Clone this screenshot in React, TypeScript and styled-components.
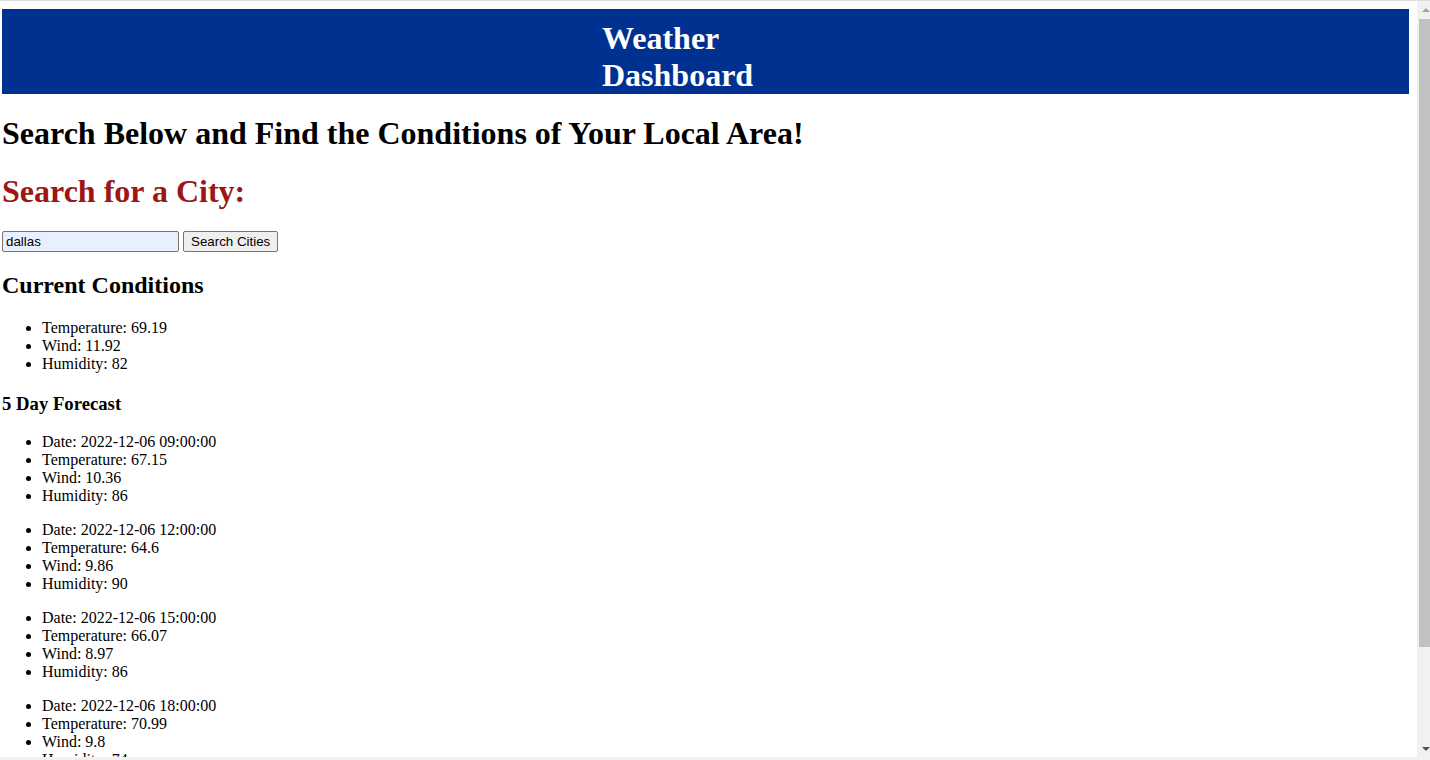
import React from "react";
import styled, { createGlobalStyle } from "styled-components";

type Forecast = {
  date: string;
  temp: string;
  wind: string;
  humidity: string;
};

const forecasts: Forecast[] = [
  { date: "2022-12-06 09:00:00", temp: "67.15", wind: "10.36", humidity: "86" },
  { date: "2022-12-06 12:00:00", temp: "64.6", wind: "9.86", humidity: "90" },
  { date: "2022-12-06 15:00:00", temp: "66.07", wind: "8.97", humidity: "86" },
  { date: "2022-12-06 18:00:00", temp: "70.99", wind: "9.8", humidity: "74" },
];

const GlobalStyle = createGlobalStyle`
  html, body {
    margin: 0;
    padding: 0;
    height: 760px;
    overflow: hidden;
    background: #ffffff;
  }
`;

const Frame = styled.div`
  display: flex;
  flex-direction: column;
  width: 1430px;
  height: 760px;
  border-top: 1px solid #dedede;
  box-sizing: border-box;
`;

const Viewport = styled.div`
  flex: 1;
  display: flex;
  min-height: 0;
`;

const Page = styled.div`
  flex: 1;
  min-width: 0;
  overflow: hidden;
  padding: 8px 8px 0 2px;
  font-family: "Liberation Serif", "Times New Roman", serif;
  font-size: 16px;
  color: #000000;
`;

const BottomBand = styled.div`
  height: 3px;
  background: #f1f1f1;
`;

/* fake browser scrollbar */
const ScrollBar = styled.div`
  width: 13px;
  background: #f1f1f1;
  display: flex;
  flex-direction: column;
  align-items: flex-end;
`;

const ScrollButton = styled.div`
  width: 13px;
  height: 17px;
  display: flex;
  align-items: center;
  justify-content: center;
  padding-left: 4px;
  box-sizing: border-box;
`;

const Thumb = styled.div`
  width: 11px;
  height: 628px;
  margin-top: 1px;
  background: #c1c1c1;
`;

const Spacer = styled.div`
  flex: 1;
`;

const Header = styled.header`
  background: #003190;
  padding: 11px 0 0;
`;

const Title = styled.h1`
  width: 207px;
  margin: 0 auto;
  color: #ffffff;
  font-size: 32px;
  font-weight: bold;
`;

const Tagline = styled.h1<{ $red?: boolean }>`
  font-size: 32px;
  margin: 21px 0;
  color: ${p => (p.$red ? "#9d1515" : "#000000")};
`;

const SearchForm = styled.form`
  display: flex;
  align-items: center;
  gap: 4px;
  margin: 0;
`;

const CityInput = styled.input`
  width: 177px;
  height: 21px;
  box-sizing: border-box;
  border: 1px solid #767676;
  border-radius: 2px;
  background: #e8f0fe;
  padding: 1px 3px;
  font-family: "Liberation Sans", Arial, sans-serif;
  font-size: 13.33px;
  color: #000000;
`;

const SearchButton = styled.button`
  height: 21px;
  box-sizing: border-box;
  border: 1px solid #767676;
  border-radius: 2px;
  background: #efefef;
  padding: 1px 7px;
  font-family: "Liberation Sans", Arial, sans-serif;
  font-size: 13.33px;
  color: #000000;
`;

const SectionTitle = styled.h2`
  font-size: 24px;
  margin: 20px 0;
`;

const SubTitle = styled.h3`
  font-size: 18.72px;
  margin: 20px 0 18px;
`;

const InfoList = styled.ul`
  margin: 16px 0;
  padding-left: 40px;
`;

const InfoItem = styled.li`
  line-height: 18px;
`;

const Arrow = ({ down, color }: { down?: boolean; color: string }) => (
  <svg width="8" height="4" viewBox="0 0 8 4">
    <path d={down ? "M0 0 H8 L4 4 Z" : "M0 4 H8 L4 0 Z"} fill={color} />
  </svg>
);

export default function App() {
  return (
    <>
      <GlobalStyle />
      <Frame>
        <Viewport>
          <Page>
            <Header>
              <Title>Weather Dashboard</Title>
            </Header>
            <Tagline>Search Below and Find the Conditions of Your Local Area!</Tagline>
            <Tagline $red>Search for a City:</Tagline>
            <SearchForm onSubmit={e => e.preventDefault()}>
              <CityInput defaultValue="dallas" />
              <SearchButton type="submit">Search Cities</SearchButton>
            </SearchForm>
            <SectionTitle>Current Conditions</SectionTitle>
            <InfoList>
              <InfoItem>Temperature: 69.19</InfoItem>
              <InfoItem>Wind: 11.92</InfoItem>
              <InfoItem>Humidity: 82</InfoItem>
            </InfoList>
            <SubTitle>5 Day Forecast</SubTitle>
            {forecasts.map(f => (
              <InfoList key={f.date}>
                <InfoItem>Date: {f.date}</InfoItem>
                <InfoItem>Temperature: {f.temp}</InfoItem>
                <InfoItem>Wind: {f.wind}</InfoItem>
                <InfoItem>Humidity: {f.humidity}</InfoItem>
              </InfoList>
            ))}
          </Page>
          <ScrollBar>
            <ScrollButton>
              <Arrow color="#a3a3a3" />
            </ScrollButton>
            <Thumb />
            <Spacer />
            <ScrollButton>
              <Arrow down color="#505050" />
            </ScrollButton>
          </ScrollBar>
        </Viewport>
        <BottomBand />
      </Frame>
    </>
  );
}
